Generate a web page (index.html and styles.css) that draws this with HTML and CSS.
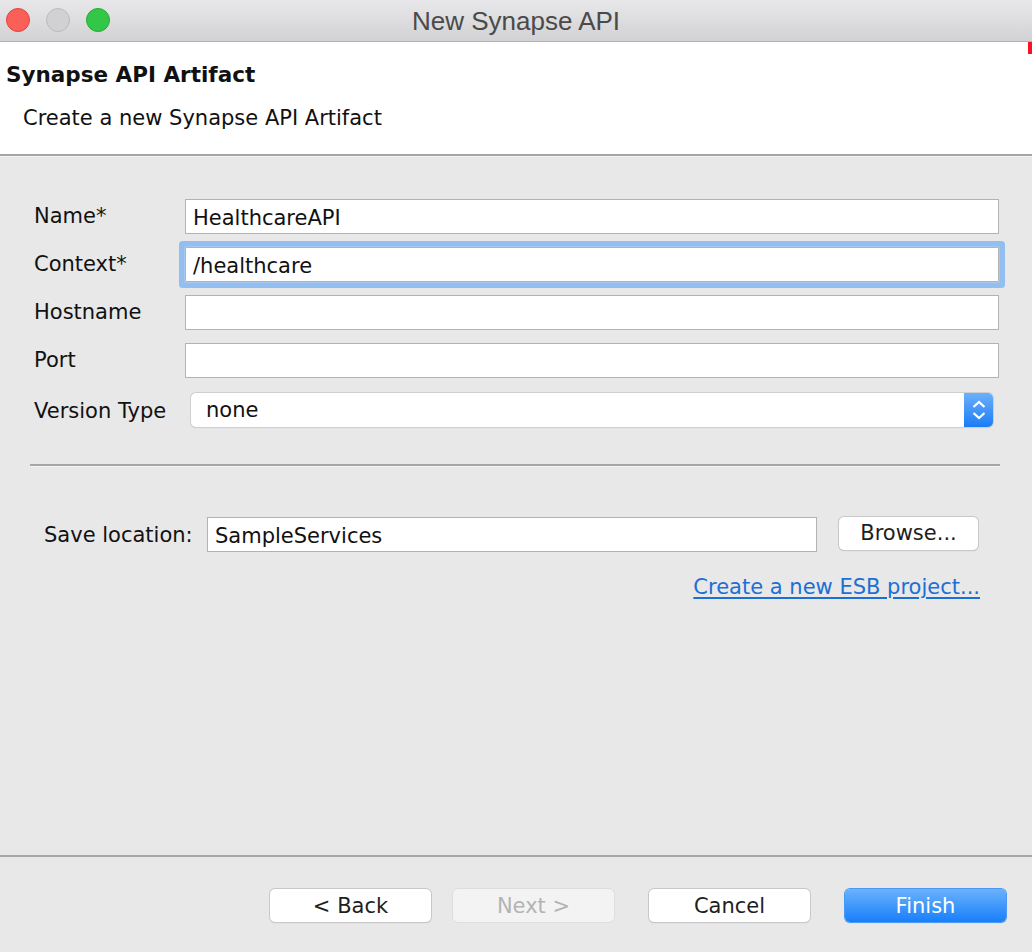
FILE: index.html
```html
<!DOCTYPE html>
<html>
<head>
<meta charset="utf-8">
<link rel="stylesheet" href="styles.css">
</head>
<body>
<div class="window">
  <div class="titlebar">
    <div class="lights">
      <span class="light red"></span>
      <span class="light gray"></span>
      <span class="light green"></span>
    </div>
    <div class="title">New Synapse API</div>
  </div>
  <div class="header">
    <div class="h-title">Synapse API Artifact</div>
    <div class="h-sub">Create a new Synapse API Artifact</div>
    <span class="redmark"></span>
  </div>
  <div class="content">
    <div class="form">
      <label class="lbl">Name*</label>
      <div class="field"><span class="val">HealthcareAPI</span></div>
      <label class="lbl">Context*</label>
      <div class="field focus"><span class="val">/healthcare</span></div>
      <label class="lbl">Hostname</label>
      <div class="field"></div>
      <label class="lbl">Port</label>
      <div class="field"></div>
      <label class="lbl lbl-sel">Version Type</label>
      <div class="select">
        <span class="sel-val">none</span>
        <span class="sel-btn">
          <svg width="16" height="22" viewBox="0 0 16 22"><path d="M2.5 8 L8 3 L13.5 8" fill="none" stroke="#fff" stroke-width="2.2"/><path d="M2.5 14 L8 19 L13.5 14" fill="none" stroke="#fff" stroke-width="2.2"/></svg>
        </span>
      </div>
    </div>
    <div class="sep"></div>
    <div class="save-row">
      <label class="lbl save-lbl">Save location:</label>
      <div class="field save-field"><span class="val">SampleServices</span></div>
      <button class="btn browse">Browse...</button>
    </div>
    <div class="link-row"><a class="link">Create a new ESB project...</a></div>
  </div>
  <div class="footer">
    <button class="btn">&lt; Back</button>
    <button class="btn disabled">Next &gt;</button>
    <button class="btn cancel">Cancel</button>
    <button class="btn primary">Finish</button>
  </div>
</div>
</body>
</html>
```
FILE: styles.css
```css
* { box-sizing: border-box; }
html, body { margin: 0; padding: 0; }
body {
  width: 1032px;
  height: 952px;
  overflow: hidden;
  background: #e8e8e8;
  font-family: "DejaVu Sans", "Noto Sans", sans-serif;
  color: #111;
}
.window { width: 1032px; height: 952px; display: flex; flex-direction: column; }
.titlebar {
  height: 42px;
  background: linear-gradient(#e8e7e9, #d2d1d3);
  border-bottom: 1px solid #b1b1b1;
  display: flex;
  align-items: center;
  justify-content: center;
  position: relative;
}
.lights { position: absolute; left: 6px; top: 8px; display: flex; gap: 16px; }
.light { width: 24px; height: 24px; border-radius: 50%; display: block; }
.red { background: #fc5f57; border: 1px solid #e0443e; }
.gray { background: #d1d0d2; border: 1px solid #bcbbbd; }
.green { background: #33c748; border: 1px solid #27aa35; }
.title {
  font-family: "Liberation Sans", Arial, sans-serif;
  font-size: 26px;
  color: #4a4a4a;
  margin-top: 1px;
}
.header {
  height: 114px;
  background: #fff;
  border-bottom: 2px solid #a6a6a6;
  position: relative;
  padding: 20px 0 0 6px;
}
.h-title { font-weight: bold; font-size: 21.5px; line-height: 26px; }
.h-sub { font-size: 21px; line-height: 26px; margin: 17px 0 0 17px; }
.redmark { position: absolute; right: 0; top: 0; width: 4px; height: 12px; background: #f5141f; }
.content { flex: 1; border-top: 1px solid #f4f4f4; }
.form {
  display: grid;
  grid-template-columns: 151px 1fr;
  row-gap: 13px;
  padding: 42px 33px 0 34px;
  align-items: center;
}
.lbl { font-size: 21px; line-height: 24px; color: #111; position: relative; top: -1px; }
.field {
  height: 35px;
  background: #fff;
  border: 1px solid #b3b3b3;
  display: flex;
  align-items: center;
  padding-left: 7px;
  font-size: 21px;
}
.field.focus {
  border-radius: 1px;
  box-shadow: 0 0 0 1px #a8c9ef, 0 0 0 6px #93bef0;
  border-color: #b3b3b3;
}
.val { position: relative; top: 1px; }
.lbl-sel { top: 2px; }
.select {
  margin: 2px 6px 0 6px;
  height: 34px;
  background: #fff;
  border-radius: 5px;
  box-shadow: 0 0 0 1px #cfcfcf, 0 1px 1px rgba(0,0,0,0.18);
  display: flex;
  align-items: center;
  justify-content: space-between;
  font-size: 21px;
  overflow: hidden;
}
.sel-val { padding-left: 15px; }
.sel-btn {
  width: 29px;
  height: 34px;
  background: linear-gradient(#6cb0fb, #1b7cf6);
  display: flex;
  align-items: center;
  justify-content: center;
}
.sep {
  margin: 37px 32px 0 30px;
  height: 3px;
  border-top: 2px solid #a6a6a6;
  border-bottom: 1px solid #f6f6f6;
}
.save-row {
  display: flex;
  align-items: center;
  padding: 50px 0 0 44px;
}
.save-lbl { width: 163px; top: 0; }
.save-field { width: 610px; height: 35px; }
.btn {
  font-family: "DejaVu Sans", "Noto Sans", sans-serif;
  font-size: 21px;
  color: #1e1e1e;
  background: #fff;
  border: none;
  border-radius: 5px;
  box-shadow: 0 0 0 1px #c8c8c8, 0 1px 1px rgba(0,0,0,0.2);
  height: 33px;
  width: 161px;
  padding: 0;
}
.browse { width: 139px; margin-left: 22px; margin-top: -3px; }
.link-row { display: flex; justify-content: flex-end; padding: 23px 52px 0 0; }
.link {
  font-size: 21px;
  color: #1b6fd6;
  text-decoration: underline;
  text-underline-offset: 3px;
}
.footer {
  height: 97px;
  border-top: 2px solid #a6a6a6;
  display: flex;
  justify-content: flex-end;
  align-items: flex-start;
  padding: 32px 26px 0 0;
  gap: 22px;
}
.footer .cancel { margin-left: 13px; }
.footer .primary { margin-left: 13px; }
.btn.disabled { background: #f3f3f3; color: #b3b3b3; box-shadow: 0 0 0 1px #dedede; }
.btn.primary {
  background: linear-gradient(#6ab2fb, #187ffb);
  color: #fff;
  box-shadow: 0 0 0 1px #4a97f5, 0 1px 1px rgba(0,0,0,0.15);
}
```
